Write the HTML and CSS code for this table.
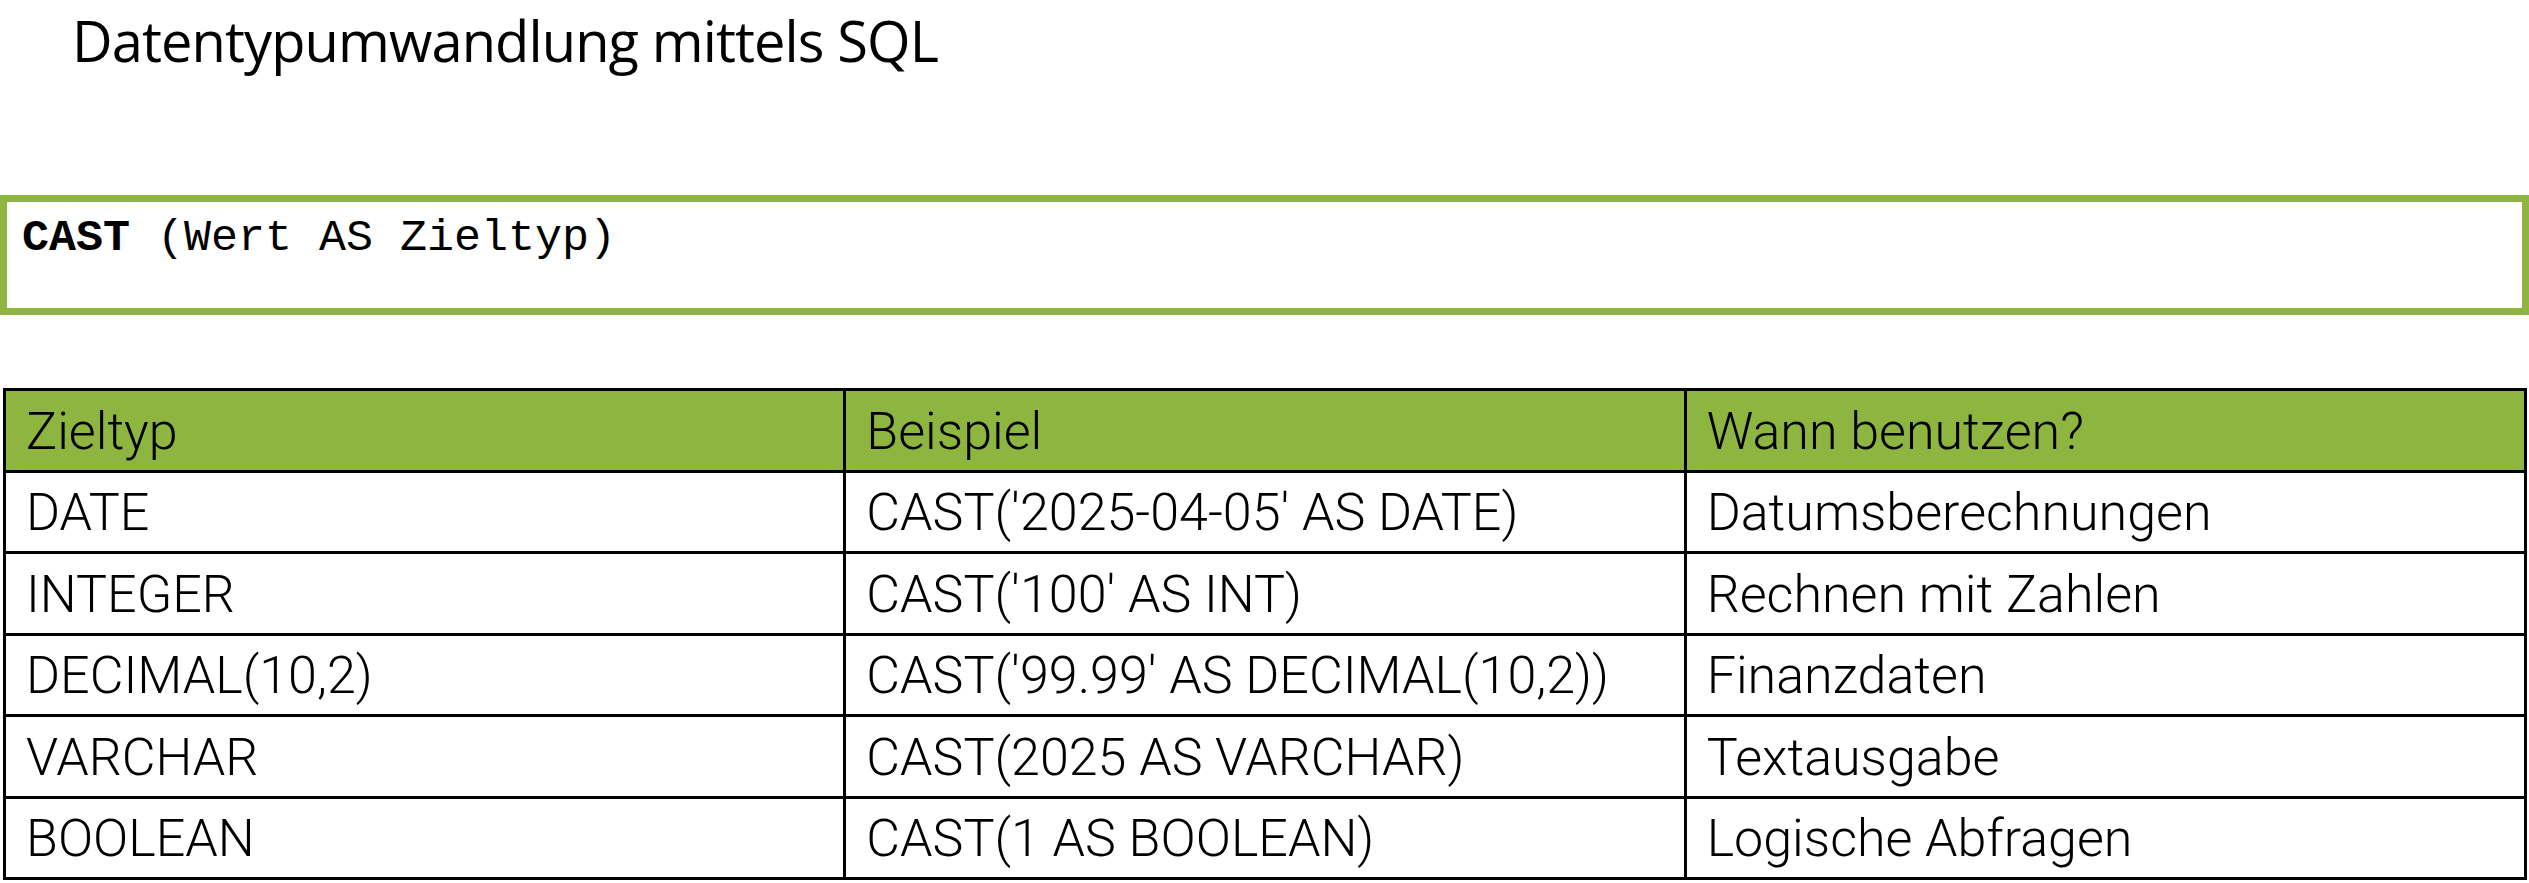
FILE: index.html
```html
<!DOCTYPE html>
<html lang="de">
<head>
<meta charset="utf-8">
<title>Datentypumwandlung mittels SQL</title>
<link rel="stylesheet" href="styles.css">
</head>
<body>
<h1 class="title">Datentypumwandlung mittels SQL</h1>
<div class="syntax"><code><b>CAST</b> (Wert AS Zieltyp)</code></div>
<table class="types">
  <colgroup><col class="c1"><col class="c2"><col class="c3"></colgroup>
  <thead>
    <tr><th>Zieltyp</th><th>Beispiel</th><th>Wann benutzen?</th></tr>
  </thead>
  <tbody>
    <tr><td>DATE</td><td>CAST('2025-04-05' AS DATE)</td><td>Datumsberechnungen</td></tr>
    <tr><td>INTEGER</td><td>CAST('100' AS INT)</td><td>Rechnen mit Zahlen</td></tr>
    <tr><td>DECIMAL(10,2)</td><td>CAST('99.99' AS DECIMAL(10,2))</td><td>Finanzdaten</td></tr>
    <tr><td>VARCHAR</td><td>CAST(2025 AS VARCHAR)</td><td>Textausgabe</td></tr>
    <tr><td>BOOLEAN</td><td>CAST(1 AS BOOLEAN)</td><td>Logische Abfragen</td></tr>
  </tbody>
</table>
</body>
</html>
```
FILE: styles.css
```css
html, body {
  margin: 0;
  padding: 0;
  background: #ffffff;
  color: #000000;
}

.title {
  margin: 0;
  padding: 2px 0 0 72px;
  font-family: "Open Sans", "Noto Sans", sans-serif;
  font-weight: 400;
  font-size: 56px;
  line-height: 76px;
  letter-spacing: -0.9px;
}

.syntax {
  margin-top: 117px;
  border: 7px solid #8db53f;
  padding: 11px 15px 44px;
}

.syntax code {
  font-family: "Liberation Mono", "Courier New", monospace;
  font-size: 45px;
  line-height: 51px;
  white-space: pre;
}

.syntax b {
  font-weight: 700;
}

.types {
  margin: 73px 0 0 3px;
  width: 2524px;
  border-collapse: collapse;
  table-layout: fixed;
  font-family: Roboto, "Liberation Sans", sans-serif;
  font-weight: 300;
  font-size: 52px;
}

.types col {
  width: 33.333%;
}

.types th,
.types td {
  border: 3px solid #000000;
  height: 76.5px;
  padding: 2px 20px 0;
  text-align: left;
  vertical-align: middle;
  font-weight: 300;
  line-height: 61px;
  white-space: nowrap;
}

.types th {
  background: #8db53f;
}
```
